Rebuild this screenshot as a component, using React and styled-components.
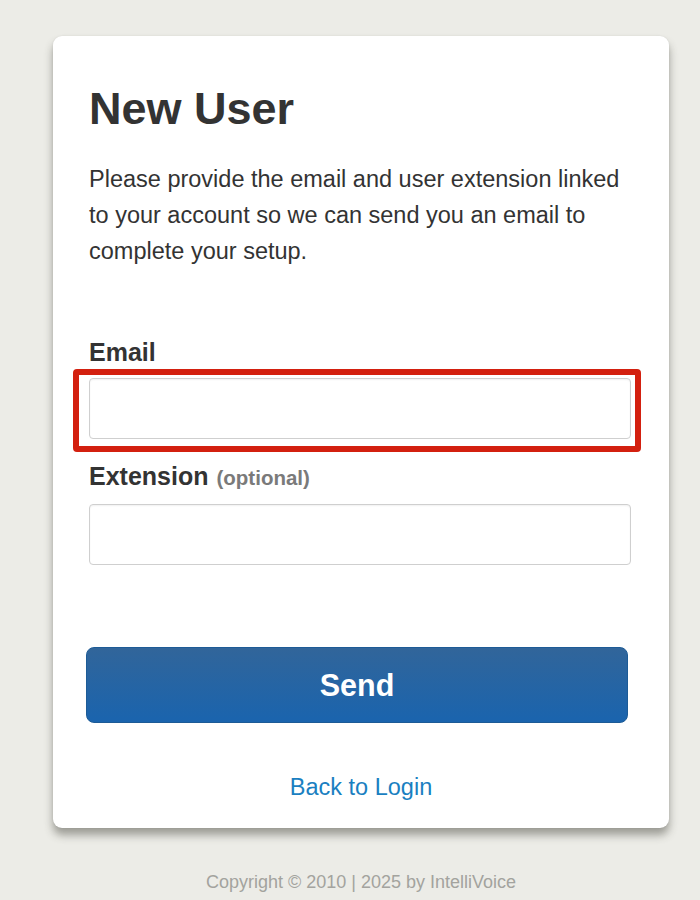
import React from "react";
import styled, { createGlobalStyle } from "styled-components";

const Global = createGlobalStyle`
  html, body {
    margin: 0;
    padding: 0;
    background: #ecece7;
    font-family: "Liberation Sans", Arial, Helvetica, sans-serif;
    color: #333;
  }
`;

const Page = styled.div`
  width: 616px;
  margin: 36px 0 0 53px;
  display: flex;
  flex-direction: column;
`;

const Card = styled.div`
  background: #fff;
  border-radius: 9px;
  padding: 50px 38px 26px 36px;
  box-shadow: 0 7px 9px rgba(60, 60, 50, 0.45), 0 0 2px rgba(0, 0, 0, 0.08);
  display: flex;
  flex-direction: column;
`;

const Title = styled.h1`
  margin: 0;
  font-size: 45px;
  line-height: 45px;
  font-weight: 700;
  color: #333;
`;

const Intro = styled.p`
  margin: 31px 0 0;
  font-size: 23.5px;
  line-height: 35.8px;
  color: #333;
`;

const Label = styled.label`
  display: block;
  margin-top: ${(p) => p.$top || "22px"};
  font-size: 25px;
  line-height: 30px;
  font-weight: 700;
  color: #333;
`;

const Hint = styled.span`
  font-size: 20.5px;
  color: #7a7a7a;
  margin-left: 8px;
`;

const Field = styled.div`
  position: relative;
  margin-top: 11px;
`;

const Input = styled.input`
  display: block;
  box-sizing: border-box;
  width: 100%;
  height: 61px;
  border: 1px solid #cfcfcf;
  border-radius: 4px;
  background: #fff;
  box-shadow: inset 0 1px 2px rgba(0, 0, 0, 0.06);
  font-size: 22px;
  padding: 0 12px;
  outline: none;
`;

const Highlight = styled.div`
  position: absolute;
  top: -9px;
  left: -16px;
  right: -10px;
  bottom: -13px;
  border: 6px solid #d3200f;
  border-radius: 4px;
  pointer-events: none;
`;

const SendButton = styled.button`
  margin: 82px 0 0 -3px;
  width: 542px;
  height: 76px;
  border: 1px solid #1d5b96;
  border-radius: 8px;
  background: linear-gradient(to bottom, #31659a, #1a64ae);
  color: #fff;
  font-family: "Liberation Sans", Arial, sans-serif;
  font-size: 30.5px;
  font-weight: 700;
  cursor: pointer;
`;

const BackLink = styled.a`
  margin-top: 49px;
  align-self: center;
  margin-left: 2px;
  font-size: 23.5px;
  line-height: 30px;
  color: #1a7fc1;
  text-decoration: none;
`;

const Copyright = styled.div`
  margin-top: 44px;
  text-align: center;
  font-size: 18px;
  line-height: 21px;
  color: #a3a39e;
`;

export default function App() {
  return (
    <>
      <Global />
      <Page>
        <Card>
          <Title>New User</Title>
          <Intro>
            Please provide the email and user extension linked to your account
            so we can send you an email to complete your setup.
          </Intro>
          <Label $top="68px">Email</Label>
          <Field>
            <Input type="email" />
            <Highlight />
          </Field>
          <Label>
            Extension<Hint>(optional)</Hint>
          </Label>
          <Field>
            <Input type="text" />
          </Field>
          <SendButton>Send</SendButton>
          <BackLink href="#">Back to Login</BackLink>
        </Card>
        <Copyright>Copyright © 2010 | 2025 by IntelliVoice</Copyright>
      </Page>
    </>
  );
}
